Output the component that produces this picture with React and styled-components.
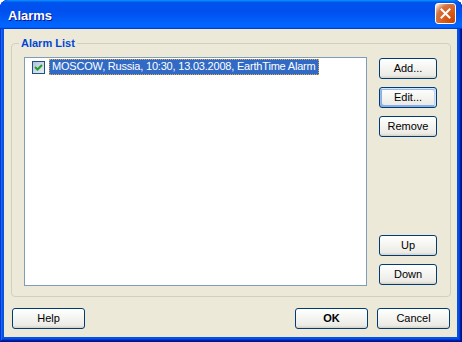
import React from 'react';
import styled, { createGlobalStyle, css } from 'styled-components';

const GlobalStyle = createGlobalStyle`
  html, body { margin: 0; padding: 0; background: #ffffff; }
  body { font-family: "Liberation Sans", Tahoma, Arial, sans-serif; font-size: 11px; }
`;

const FONT = `"Liberation Sans", Tahoma, Arial, sans-serif`;

const Window = styled.div`
  width: 462px;
  height: 342px;
  box-sizing: border-box;
  display: flex;
  flex-direction: column;
  background: #0553e3;
  border-radius: 8px 8px 0 0;
  overflow: hidden;
  box-shadow: inset -1px -1px #00138c, inset 1px 1px #0831d9, inset -2px -2px #001ea0,
    inset 2px 2px #166aee, inset -3px -3px #003bda, inset 3px 3px #0855dd;
`;

const TitleBar = styled.div`
  height: 29px;
  flex: none;
  display: flex;
  align-items: center;
  justify-content: space-between;
  padding: 0 6px 0 8px;
  box-sizing: border-box;
  border-radius: 8px 8px 0 0;
  background: linear-gradient(180deg, #0997ff 0%, #0053ee 8%, #0050ee 40%, #0066ff 88%,
    #0066ff 93%, #005bff 95%, #003dd7 96%, #003dd7 100%);
`;

const Title = styled.span`
  color: #ffffff;
  font: bold 13px ${FONT};
  text-shadow: 1px 1px #0f1089;
  padding-top: 1px;
`;

const CloseButton = styled.div`
  width: 21px;
  height: 21px;
  box-sizing: border-box;
  border: 1px solid #ffffff;
  border-radius: 3px;
  display: flex;
  align-items: center;
  justify-content: center;
  background: radial-gradient(circle at 90% 90%, #cc4600 0%, #dc6527 55%, #cd7546 70%, #ffccb2 90%, #ffffff 100%);
  margin-top: -3px;
`;

const Client = styled.div`
  flex: 1;
  display: flex;
  flex-direction: column;
  margin: 0 5px 5px 4px;
  padding: 14px 6px 0 7px;
  background: #ece9d8;
`;

const GroupBox = styled.div`
  height: 254px;
  box-sizing: border-box;
  display: flex;
  flex-direction: column;
  border: 1px solid #d0d0bf;
  border-radius: 4px;
  padding: 0 13px 10px 12px;
`;

const Legend = styled.div`
  align-self: flex-start;
  margin: -7px 0 0 -5px;
  padding: 0 2px;
  height: 13px;
  line-height: 13px;
  background: #ece9d8;
  color: #0046d5;
  font: bold 11px ${FONT};
`;

const GroupBody = styled.div`
  flex: 1;
  display: flex;
  gap: 12px;
  margin-top: 7px;
  min-height: 0;
`;

const ListBox = styled.div`
  flex: 1;
  background: #ffffff;
  border: 1px solid #7f9db9;
  box-sizing: border-box;
`;

const ListRow = styled.div`
  display: flex;
  align-items: center;
  height: 16px;
  margin-top: 1px;
  padding-left: 7px;
`;

const CheckBox = styled.div`
  width: 13px;
  height: 13px;
  box-sizing: border-box;
  border: 1px solid #1c5180;
  background: linear-gradient(135deg, #b3c1da 0%, #d3dcec 60%, #e8edf6 100%);
  margin-right: 4px;
  display: flex;
  align-items: center;
  justify-content: center;
`;

const ItemText = styled.span`
  height: 16px;
  box-sizing: border-box;
  line-height: 14px;
  padding: 0 2px;
  background: #316ac5;
  color: #ffffff;
  font: 11px ${FONT};
  letter-spacing: -0.2px;
  white-space: nowrap;
  border: 1px dotted #d8a64a;
`;

const ButtonColumn = styled.div`
  width: 58px;
  display: flex;
  flex-direction: column;
  justify-content: space-between;
  padding: 1px 0 1px;
`;

const ButtonStack = styled.div`
  display: flex;
  flex-direction: column;
  gap: 8px;
`;

const Button = styled.button`
  width: ${(p) => p.$w || 58}px;
  height: 21px;
  box-sizing: border-box;
  padding: 0;
  border: 1px solid #003c74;
  border-radius: 3px;
  background: linear-gradient(180deg, #ffffff 0%, #f6f6f3 40%, #ecebe6 86%, #d6d0c5 100%);
  color: #000000;
  font: ${(p) => (p.$bold ? 'bold' : 'normal')} 11px ${FONT};
  line-height: 19px;
  cursor: default;
  ${(p) =>
    p.$focus &&
    css`
      box-shadow: inset -1px 1px #cee7ff, inset 1px 2px #98b8ea, inset -2px 2px #bcd4f6,
        inset 1px -1px #89ade4, inset 2px -2px #89ade4;
    `}
`;

const Footer = styled.div`
  display: flex;
  align-items: center;
  margin-top: 11px;
  padding: 0 1px 0 1px;
`;

const Spacer = styled.div`
  flex: 1;
`;

const FooterRight = styled.div`
  display: flex;
  gap: 9px;
`;

const CheckMark = () => (
  <svg width="9" height="9" viewBox="0 0 9 9">
    <path d="M1 4 L3.5 6.5 L8 2" fill="none" stroke="#21a121" strokeWidth="2" />
  </svg>
);

const CloseX = () => (
  <svg width="11" height="11" viewBox="0 0 11 11">
    <path d="M1.5 1.5 L9.5 9.5 M9.5 1.5 L1.5 9.5" stroke="#ffffff" strokeWidth="2" strokeLinecap="square" />
  </svg>
);

const App = () => {
  const alarms = ['MOSCOW, Russia, 10:30, 13.03.2008, EarthTime Alarm'];

  return (
    <>
      <GlobalStyle />
      <Window>
        <TitleBar>
          <Title>Alarms</Title>
          <CloseButton>
            <CloseX />
          </CloseButton>
        </TitleBar>
        <Client>
          <GroupBox>
            <Legend>Alarm List</Legend>
            <GroupBody>
              <ListBox>
                {alarms.map((a) => (
                  <ListRow key={a}>
                    <CheckBox>
                      <CheckMark />
                    </CheckBox>
                    <ItemText>{a}</ItemText>
                  </ListRow>
                ))}
              </ListBox>
              <ButtonColumn>
                <ButtonStack>
                  <Button>Add...</Button>
                  <Button $focus>Edit...</Button>
                  <Button>Remove</Button>
                </ButtonStack>
                <ButtonStack>
                  <Button>Up</Button>
                  <Button>Down</Button>
                </ButtonStack>
              </ButtonColumn>
            </GroupBody>
          </GroupBox>
          <Footer>
            <Button $w={73}>Help</Button>
            <Spacer />
            <FooterRight>
              <Button $w={73} $bold>OK</Button>
              <Button $w={73}>Cancel</Button>
            </FooterRight>
          </Footer>
        </Client>
      </Window>
    </>
  );
};

export default App;
